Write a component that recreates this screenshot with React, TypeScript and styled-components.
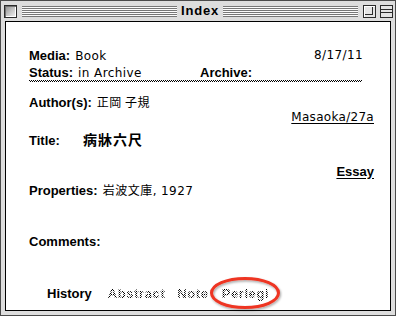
import React from "react";
import styled, { createGlobalStyle } from "styled-components";

const GlobalStyle = createGlobalStyle`
  html, body {
    margin: 0;
    padding: 0;
    background: #fff;
    width: 396px;
    height: 319px;
    overflow: hidden;
  }
  #root {
    width: 396px;
    height: 319px;
    overflow: hidden;
  }
`;

const CHICAGO = `"Liberation Sans", Arial, sans-serif`;
const GENEVA = `"DejaVu Sans", "Noto Sans CJK JP", sans-serif`;
const CJK = `"Noto Sans CJK JP", "DejaVu Sans", sans-serif`;

const Window = styled.div`
  width: 396px;
  height: 316px;
  box-sizing: border-box;
  border: 1px solid #4a4a4a;
  background: #dddddd;
  display: flex;
  flex-direction: column;
  padding: 0 4px 4px 4px;
`;

const TitleBar = styled.div`
  height: 20px;
  margin: 0 -4px;
  padding: 0 2px 0 3px;
  display: flex;
  align-items: center;
  flex-shrink: 0;
`;

const CloseBox = styled.div`
  width: 13px;
  height: 13px;
  box-sizing: border-box;
  border: 1px solid #2a2a2a;
  background: linear-gradient(135deg, #8c8c8c 0%, #c8c8c8 55%, #f4f4f4 100%);
  box-shadow: inset 1px 1px 0 #707070, inset -1px -1px 0 #ffffff;
  flex-shrink: 0;
`;

const Stripes = styled.div<{ $width?: number }>`
  height: 11px;
  ${(p) => (p.$width ? `width: ${p.$width}px; flex-shrink: 0;` : `flex: 1;`)}
  background: repeating-linear-gradient(
    to bottom,
    #777 0px,
    #777 1px,
    #fcfcfc 1px,
    #fcfcfc 2px
  );
  margin-left: ${(p) => (p.$width ? "5px" : "0")};
`;

const WindowTitle = styled.div`
  font-family: ${CHICAGO};
  font-weight: bold;
  font-size: 13px;
  letter-spacing: 0.8px;
  color: #000;
  padding: 0 4px 0 4px;
  line-height: 20px;
  flex-shrink: 0;
`;

const ZoomBox = styled.div`
  width: 13px;
  height: 13px;
  box-sizing: border-box;
  border: 1px solid #2a2a2a;
  background: #e4e4e4;
  box-shadow: inset 1px 1px 0 #fff;
  margin-left: 5px;
  flex-shrink: 0;
  display: flex;
`;

const ZoomInner = styled.div`
  width: 7px;
  height: 7px;
  margin: 1px 0 0 1px;
  border-right: 1px solid #2a2a2a;
  border-bottom: 1px solid #2a2a2a;
`;

const CollapseBox = styled.div`
  width: 13px;
  height: 13px;
  box-sizing: border-box;
  border: 1px solid #2a2a2a;
  background: #e4e4e4;
  margin-left: 4px;
  flex-shrink: 0;
  display: flex;
  flex-direction: column;
  justify-content: center;
  gap: 2px;
`;

const CollapseLine = styled.div`
  height: 1px;
  background: #2a2a2a;
`;

const Content = styled.div`
  flex: 1;
  background: #fff;
  border: 1px solid #000;
  padding: 24px 16px 0 23px;
  display: flex;
  flex-direction: column;
  color: #000;
`;

const Row = styled.div<{ $h?: number; $mt?: number; $end?: boolean; $pr?: number }>`
  height: ${(p) => p.$h ?? 18}px;
  margin-top: ${(p) => p.$mt ?? 0}px;
  padding-right: ${(p) => p.$pr ?? 0}px;
  display: flex;
  align-items: center;
  justify-content: ${(p) => (p.$end ? "flex-end" : "space-between")};
  white-space: nowrap;
`;

const Field = styled.div<{ $w?: number; $grow?: boolean }>`
  display: flex;
  align-items: baseline;
  ${(p) => (p.$w ? `width: ${p.$w}px;` : "")}
  ${(p) => (p.$grow ? `flex: 1;` : "")}
`;

const Label = styled.span<{ $w?: number }>`
  font-family: ${CHICAGO};
  font-weight: bold;
  font-size: 13px;
  ${(p) => (p.$w ? `display: inline-block; width: ${p.$w}px;` : "margin-right: 5px;")}
`;

const Value = styled.span`
  font-family: ${GENEVA};
  font-size: 12px;
  letter-spacing: 0.4px;
`;

const Kanji = styled.span<{ $bold?: boolean; $size?: number }>`
  font-family: ${CJK};
  font-size: ${(p) => p.$size ?? 12}px;
  font-weight: ${(p) => (p.$bold ? 700 : 400)};
  letter-spacing: ${(p) => (p.$bold ? "1px" : "0.5px")};
`;

const Link = styled.span`
  font-family: ${GENEVA};
  font-size: 12px;
  letter-spacing: 0.3px;
  text-decoration: underline;
  text-underline-offset: 2px;
`;

const BoldLink = styled.span`
  font-family: ${CHICAGO};
  font-weight: bold;
  font-size: 13px;
  text-decoration: underline;
  text-underline-offset: 2px;
`;

const DottedRule = styled.div`
  width: 333px;
  height: 2px;
  flex-shrink: 0;
  background-image: linear-gradient(to right, #000 1px, transparent 1px),
    linear-gradient(to right, transparent 1px, #000 1px);
  background-size: 2px 1px, 2px 1px;
  background-position: 0 0, 0 1px;
  background-repeat: repeat-x, repeat-x;
`;

const Tabs = styled.div`
  margin-top: 34px;
  height: 18px;
  padding-left: 18px;
  display: flex;
  align-items: center;
  white-space: nowrap;
`;

const Tab = styled.span<{ $active?: boolean; $ml?: number }>`
  position: relative;
  font-family: ${CHICAGO};
  font-weight: bold;
  font-size: 13px;
  margin-left: ${(p) => p.$ml ?? 0}px;
  ${(p) =>
    p.$active
      ? `color: #000;`
      : `color: transparent;
         letter-spacing: 0.6px;
         background-image: repeating-conic-gradient(#000 0% 25%, #fff 0% 50%);
         background-size: 2px 2px;
         -webkit-background-clip: text;
         background-clip: text;`}
`;

const Highlight = styled.svg`
  position: absolute;
  left: -14px;
  top: -12px;
  width: 75px;
  height: 38px;
  overflow: visible;
  pointer-events: none;
`;

export default function App() {
  return (
    <>
      <GlobalStyle />
      <Window>
        <TitleBar>
          <CloseBox />
          <Stripes $width={155} />
          <WindowTitle>Index</WindowTitle>
          <Stripes />
          <ZoomBox>
            <ZoomInner />
          </ZoomBox>
          <CollapseBox>
            <CollapseLine />
            <CollapseLine />
          </CollapseBox>
        </TitleBar>
        <Content>
          <Row $pr={11}>
            <Field>
              <Label>Media:</Label>
              <Value>Book</Value>
            </Field>
            <Value>8/17/11</Value>
          </Row>
          <Row $h={16}>
            <Field $w={171}>
              <Label>Status:</Label>
              <Value>in Archive</Value>
            </Field>
            <Field $grow>
              <Label>Archive:</Label>
            </Field>
          </Row>
          <DottedRule />
          <Row $mt={10}>
            <Field>
              <Label>Author(s):</Label>
              <Kanji>正岡 子規</Kanji>
            </Field>
          </Row>
          <Row $h={14} $end>
            <Link>Masaoka/27a</Link>
          </Row>
          <Row $mt={6}>
            <Field>
              <Label $w={54}>Title:</Label>
              <Kanji $bold $size={14}>病牀六尺</Kanji>
            </Field>
          </Row>
          <Row $mt={14} $end>
            <BoldLink>Essay</BoldLink>
          </Row>
          <Row>
            <Field>
              <Label>Properties:</Label>
              <Kanji>岩波文庫</Kanji>
              <Value>, 1927</Value>
            </Field>
          </Row>
          <Row $mt={34}>
            <Field>
              <Label>Comments:</Label>
            </Field>
          </Row>
          <Tabs>
            <Tab $active>History</Tab>
            <Tab $ml={16}>Abstract</Tab>
            <Tab $ml={12}>Note</Tab>
            <Tab $ml={13}>
              Perlegi
              <Highlight viewBox="0 0 75 38">
                <defs>
                  <filter id="sh" x="-20%" y="-40%" width="140%" height="180%">
                    <feDropShadow dx="1" dy="1.5" stdDeviation="1" floodColor="#000" floodOpacity="0.35" />
                  </filter>
                </defs>
                <ellipse
                  cx="37"
                  cy="19"
                  rx="33.5"
                  ry="14.5"
                  fill="none"
                  stroke="#ee3422"
                  strokeWidth="3"
                  filter="url(#sh)"
                />
              </Highlight>
            </Tab>
          </Tabs>
        </Content>
      </Window>
    </>
  );
}
